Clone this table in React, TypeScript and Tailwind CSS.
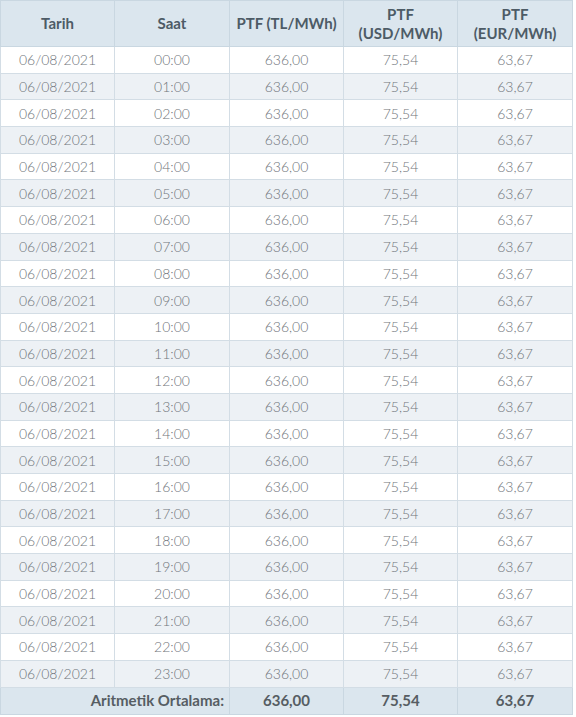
import React from "react";

const hours = Array.from({ length: 24 }, (_, i) => `${String(i).padStart(2, "0")}:00`);

export default function App() {
  return (
    <div className="w-[576px] h-[717px] bg-white" style={{ fontFamily: "Lato, 'Open Sans', sans-serif" }}>
      <table className="border-collapse w-[572px] table-fixed text-[14px]">
        <colgroup>
          <col className="w-[114px]" />
          <col className="w-[115px]" />
          <col className="w-[114px]" />
          <col className="w-[114px]" />
          <col className="w-[115px]" />
        </colgroup>
        <thead>
          <tr className="bg-[#dbe6ee] h-[46px] text-[#4d5b66] font-bold leading-[19px] text-[15px]">
            <th className="border border-[#c9d7e1] font-bold">Tarih</th>
            <th className="border border-[#c9d7e1] font-bold">Saat</th>
            <th className="border border-[#c9d7e1] font-bold">PTF (TL/MWh)</th>
            <th className="border border-[#c9d7e1] font-bold">PTF<br />(USD/MWh)</th>
            <th className="border border-[#c9d7e1] font-bold">PTF<br />(EUR/MWh)</th>
          </tr>
        </thead>
        <tbody className="text-[#70757b] font-light">
          {hours.map((h, i) => (
            <tr key={h} className={`h-[26.7px] ${i % 2 === 1 ? "bg-[#edf1f5]" : "bg-white"}`}>
              <td className="border border-[#d3dde5] text-center p-0">06/08/2021</td>
              <td className="border border-[#d3dde5] text-center p-0">{h}</td>
              <td className="border border-[#d3dde5] text-center p-0">636,00</td>
              <td className="border border-[#d3dde5] text-center p-0">75,54</td>
              <td className="border border-[#d3dde5] text-center p-0">63,67</td>
            </tr>
          ))}
        </tbody>
        <tfoot>
          <tr className="h-[27px] bg-[#dbe6ee] text-[#565d63] font-bold text-[15px]">
            <td colSpan={2} className="border border-[#c9d7e1] text-right pr-[5px]">Aritmetik Ortalama:</td>
            <td className="border border-[#c9d7e1] text-center">636,00</td>
            <td className="border border-[#c9d7e1] text-center">75,54</td>
            <td className="border border-[#c9d7e1] text-center">63,67</td>
          </tr>
        </tfoot>
      </table>
    </div>
  );
}
